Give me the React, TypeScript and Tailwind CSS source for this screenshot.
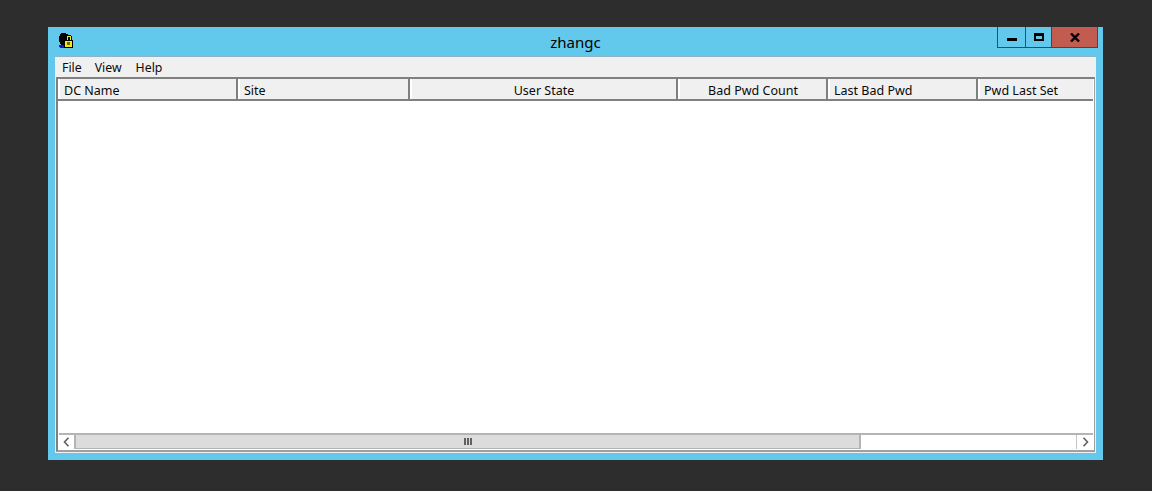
export default function App() {
  const cols: [string, number, string][] = [
    ["DC Name", 180, "justify-start pl-[4px]"],
    ["Site", 172, "justify-start pl-[4px]"],
    ["User State", 268, "justify-center"],
    ["Bad Pwd Count", 150, "justify-center"],
    ["Last Bad Pwd", 150, "justify-start pl-[4px]"],
  ];
  return (
    <div className="h-[491px] w-[1152px] bg-[#2d2d2d] pt-[27px] pl-[48px] overflow-hidden font-['Noto_Sans',sans-serif] text-[#0a0a0a]">
      <div className="w-[1055px] h-[433px] bg-[#63c9ec] flex flex-col px-[7px] pb-[7px]">
        <div className="h-[29px] shrink-0 flex items-start justify-between relative">
          <div className="pt-[6px] pl-[3px]">
            <svg width="16" height="16" viewBox="0 0 16 16" shapeRendering="crispEdges" className="block">
              <path d="M3 0h5v1h2v2h1v6H9v2H8v1H3v-1H2V9H1V3h1V1h1z" fill="#000" />
              <path d="M1 12h5v1h1v2H2v-1H1z" fill="#1a1ac8" />
              <path d="M8 3h1V2h4v1h1v4h1v8H6V7h2z" fill="#000" />
              <path d="M9 3h4v4h-1V4h-2v3H9zM7 8h7v6H7z" fill="#f4ec10" />
              <path d="M9 9h3v3H9z" fill="#6a6a10" />
            </svg>
          </div>
          <div className="absolute left-0 right-0 top-[5px] text-center text-[15px] leading-[20px] text-black">zhangc</div>
          <div className="flex h-[21px] mr-[-2px] border-x border-b border-[#3a4a55] relative">
            <div className="w-[28px] border-r border-[#3a4a55] flex items-end justify-center pb-[6px]">
              <div className="w-[10px] h-[3px] bg-black" />
            </div>
            <div className="w-[26px] border-r border-[#3a4a55] flex items-start justify-center pt-[6px]">
              <div className="w-[10px] h-[8px] border-2 border-black border-t-[3px]" />
            </div>
            <div className="w-[45px] bg-[#c25b50] flex items-center justify-center">
              <svg width="10" height="9" viewBox="0 0 10 9">
                <path d="M1 0.5L9 8.5M9 0.5L1 8.5" stroke="#000" strokeWidth="2.4" />
              </svg>
            </div>
          </div>
        </div>
        <div className="flex-1 flex flex-col bg-[#f0f0f0] border-t border-[#8fb4c4] min-h-0">
          <div className="h-[20px] shrink-0 flex items-center pt-[1px] text-[12.3px] leading-[19px]">
            <span className="ml-[7px]">File</span>
            <span className="ml-[13px]">View</span>
            <span className="ml-[14px]">Help</span>
          </div>
          <div className="flex-1 mx-[1px] mb-[1px] flex flex-col bg-white border-t-2 border-l-2 border-[#808080] border-r border-r-[#a0a0a0] border-b-2 border-b-[#a0a0a0] min-h-0">
            <div className="h-[22px] shrink-0 mr-[1px] flex bg-[#f0f0f0] border-b-2 border-[#808080] overflow-hidden text-[12.5px] leading-[18px]">
              {cols.map(([name, w, cls]) => (
                <div
                  key={name}
                  className={`h-[20px] shrink-0 flex items-center pt-[3px] border-l-2 border-white border-r-2 border-r-[#808080] ${cls}`}
                  style={{ width: w }}
                >
                  {name}
                </div>
              ))}
              <div className="h-[20px] flex-1 flex items-center pt-[3px] pl-[4px] border-l-2 border-white">
                Pwd Last Set
              </div>
            </div>
            <div className="flex-1 bg-white" />
            <div className="h-[16px] shrink-0 mx-[1px] mb-[1px] flex bg-white border-t-2 border-[#b4b4b4] items-stretch">
              <div className="w-[15px] flex items-center justify-center">
                <svg width="7" height="10" viewBox="0 0 7 10">
                  <path d="M5.5 0.8L1.5 5L5.5 9.2" fill="none" stroke="#606060" strokeWidth="1.6" />
                </svg>
              </div>
              <div className="w-[787px] bg-[#dcdcdc] border-x-2 border-b border-[#b4b4b4] flex items-center justify-center gap-[1px] pl-[1px]">
                <div className="w-[2px] h-[7px] bg-[#606060]" />
                <div className="w-[2px] h-[7px] bg-[#606060]" />
                <div className="w-[2px] h-[7px] bg-[#606060]" />
              </div>
              <div className="flex-1" />
              <div className="w-[17px] border-l border-[#c4c4c4] flex items-center justify-center">
                <svg width="7" height="10" viewBox="0 0 7 10">
                  <path d="M1.5 0.8L5.5 5L1.5 9.2" fill="none" stroke="#606060" strokeWidth="1.6" />
                </svg>
              </div>
            </div>
          </div>
        </div>
      </div>
    </div>
  );
}
